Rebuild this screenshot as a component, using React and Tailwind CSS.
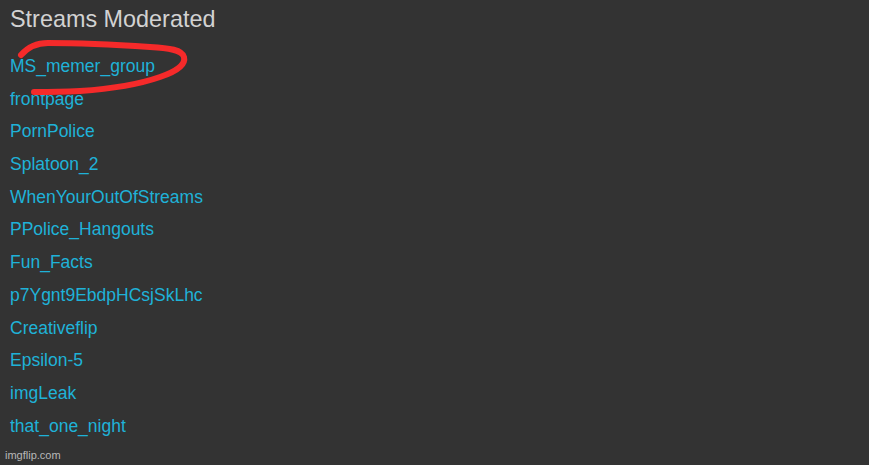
import React from 'react';

const streams = [
    'MS_memer_group',
    'frontpage',
    'PornPolice',
    'Splatoon_2',
    'WhenYourOutOfStreams',
    'PPolice_Hangouts',
    'Fun_Facts',
    'p7Ygnt9EbdpHCsjSkLhc',
    'Creativeflip',
    'Epsilon-5',
    'imgLeak',
    'that_one_night',
];

function App() {
    return (
        <div className="relative w-[869px] h-[465px] overflow-hidden bg-[#333333] font-['Liberation_Sans',Arial,sans-serif]">
            <div className="px-[10px] pt-[5px]">
                <h2 className="text-[23.4px] leading-[28px] text-[#d2d2d2]">Streams Moderated</h2>
                <ul className="mt-[23px] flex flex-col gap-[12.7px]">
                    {streams.map((s) => (
                        <li key={s} className="text-[17.5px] leading-[20px]">
                            <a className="block text-[#1fb2d8]">{s}</a>
                        </li>
                    ))}
                </ul>
            </div>
            {/* red marker scribble */}
            <svg className="absolute left-0 top-0 pointer-events-none" width="869" height="465">
                <path
                    d="M21 55 C28 47 36 43 48 43 C80 43 120 45 150 47 C170 48 182 50 184 57 C186 65 175 72 160 77 C140 84 110 89 80 91 C60 92 45 92 34 92"
                    fill="none"
                    stroke="#f52a2a"
                    strokeWidth="6"
                    strokeLinecap="round"
                />
            </svg>
            <div className="absolute left-[5px] bottom-[3px] text-[11px] leading-[13px] text-[#b8b8b8]">imgflip.com</div>
        </div>
    );
}

export default App;
